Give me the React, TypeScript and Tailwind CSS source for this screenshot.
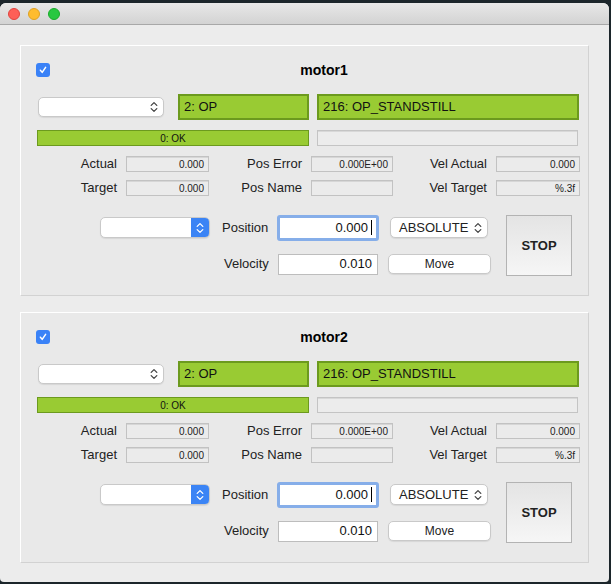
import React from "react";

const Chevrons = ({ color = "#444" }: { color?: string }) => (
  <svg width="8" height="12" viewBox="0 0 8 12" fill="none">
    <path d="M1.2 4.4 L4 1.6 L6.8 4.4" stroke={color} strokeWidth="1.3" strokeLinecap="round" strokeLinejoin="round" />
    <path d="M1.2 7.6 L4 10.4 L6.8 7.6" stroke={color} strokeWidth="1.3" strokeLinecap="round" strokeLinejoin="round" />
  </svg>
);

const CheckBox = () => (
  <div className="w-[14px] h-[14px] rounded-[3px] bg-[#3a82f7] flex items-center justify-center">
    <svg width="10" height="10" viewBox="0 0 10 10" fill="none">
      <path d="M2.4 5.2 L4.2 7.4 L7.6 2.4" stroke="white" strokeWidth="1.5" strokeLinecap="round" strokeLinejoin="round" />
    </svg>
  </div>
);

const ReadField = ({ value, w }: { value?: string; w: string }) => (
  <div
    className={`${w} h-[16px] border border-[#c2c2c2] bg-[#ebebeb] shadow-[inset_0_1px_0_#d6d6d6] flex items-center justify-end pr-[4px] text-[10px] text-[#222]`}
  >
    {value}
  </div>
);

const Label = ({ text, w }: { text: string; w: string }) => (
  <div className={`${w} text-right text-[13px] text-[#222] pr-[9px]`}>{text}</div>
);

const MotorBox = ({ name }: { name: string }) => (
  <div className="mx-[20px] h-[251px] border border-[#d2d2d2] border-t-white border-l-white bg-[#e9e9e9]">
    {/* title row */}
    <div className="flex items-center h-[14px] mt-[17px] pl-[15px]">
      <CheckBox />
      <div className="flex-1 text-center font-bold text-[14px] text-black pl-[10px]">{name}</div>
    </div>

    {/* state row */}
    <div className="flex items-center mt-[17px] h-[26px]">
      <div className="ml-[17px] w-[126px] h-[20px] rounded-[5px] bg-white border border-[#c9c9c9] shadow-[0_1px_1px_rgba(0,0,0,0.08)] flex items-center justify-end pr-[5px]">
        <Chevrons />
      </div>
      <div className="ml-[14px] w-[131px] h-[26px] bg-[#99cb33] border-2 border-[#6c9a1e] flex items-center pl-[4px] text-[13px] text-[#111]">
        2: OP
      </div>
      <div className="ml-[8px] w-[262px] h-[26px] bg-[#99cb33] border-2 border-[#6c9a1e] flex items-center pl-[4px] text-[13px] text-[#111]">
        216: OP_STANDSTILL
      </div>
    </div>

    {/* error row */}
    <div className="flex items-center mt-[10px] h-[16px]">
      <div className="ml-[16px] w-[272px] h-[16px] bg-[#99cb33] border border-[#6c9a1e] flex items-center justify-center text-[10px] text-[#111]">
        0: OK
      </div>
      <div className="ml-[8px] w-[261px] h-[16px] bg-[#ececec] border border-[#c4c4c4] shadow-[inset_0_1px_0_#d8d8d8]" />
    </div>

    {/* readouts */}
    <div className="flex items-center mt-[10px] h-[16px]">
      <Label text="Actual" w="w-[105px]" />
      <ReadField value="0.000" w="w-[83px]" />
      <Label text="Pos Error" w="w-[102px]" />
      <ReadField value="0.000E+00" w="w-[82px]" />
      <Label text="Vel Actual" w="w-[103px]" />
      <ReadField value="0.000" w="w-[84px]" />
    </div>
    <div className="flex items-center mt-[8px] h-[16px]">
      <Label text="Target" w="w-[105px]" />
      <ReadField value="0.000" w="w-[83px]" />
      <Label text="Pos Name" w="w-[102px]" />
      <ReadField w="w-[82px]" />
      <Label text="Vel Target" w="w-[103px]" />
      <ReadField value="%.3f" w="w-[84px]" />
    </div>

    {/* move controls */}
    <div className="flex mt-[18px]">
      <div className="ml-[79px] grid grid-cols-[110px_67px_102px_112px] grid-rows-[27px_28px] gap-y-[9px] items-center">
        <div className="h-[21px] rounded-[5px] bg-white border border-[#c9c9c9] shadow-[0_1px_1px_rgba(0,0,0,0.08)] flex overflow-hidden">
          <div className="flex-1" />
          <div className="w-[18px] bg-[#3b84f5] flex items-center justify-center">
            <Chevrons color="white" />
          </div>
        </div>
        <div className="text-[13px] text-[#222] pl-[12px]">Position</div>
        <div className="h-[26px] rounded-[3px] bg-white border-[3px] border-[#86aee9] flex items-center justify-end pr-[4px] text-[13px] text-[#111]">
          0.000
          <span className="ml-[3px] w-[1px] h-[15px] bg-black" />
        </div>
        <div className="ml-[11px] w-[98px] h-[21px] rounded-[5px] bg-white border border-[#c9c9c9] shadow-[0_1px_1px_rgba(0,0,0,0.08)] flex items-center pl-[8px] pr-[5px] justify-between text-[13px] text-[#222]">
          ABSOLUTE
          <Chevrons />
        </div>

        <div />
        <div className="text-[13px] text-[#222] pl-[14px]">Velocity</div>
        <div className="ml-[1px] w-[100px] h-[21px] bg-white border border-[#bdbdbd] flex items-center justify-end pr-[5px] text-[13px] text-[#111]">
          0.010
        </div>
        <div className="ml-[9px] w-[103px] h-[20px] rounded-[5px] bg-white border border-[#c9c9c9] shadow-[0_1px_1px_rgba(0,0,0,0.08)] flex items-center justify-center text-[12px] text-[#222]">
          Move
        </div>
      </div>
      <div className="ml-[15px] mt-[1px] w-[66px] h-[61px] border border-[#b3b3b3] bg-gradient-to-b from-[#e4e4e4] to-[#f6f6f6] flex items-center justify-center font-bold text-[13px] text-[#222]">
        STOP
      </div>
    </div>
  </div>
);

export default function App() {
  return (
    <div
      className="w-[611px] h-[584px] bg-[#1c262b] pt-[3px]"
      style={{ fontFamily: '"Liberation Sans", Arial, sans-serif' }}
    >
      <div className="w-[609px] h-[579px] bg-[#ececec] rounded-t-[6px] rounded-b-[4px] overflow-hidden flex flex-col">
        <div className="h-[22px] bg-gradient-to-b from-[#e8e8e8] to-[#d3d3d3] border-b border-[#a8a8a8] flex items-center pl-[8px] gap-[8px]">
          <div className="w-[12px] h-[12px] rounded-full bg-[#fe5f57] border border-[#e0443e]" />
          <div className="w-[12px] h-[12px] rounded-full bg-[#febc2e] border border-[#dea123]" />
          <div className="w-[12px] h-[12px] rounded-full bg-[#28c840] border border-[#1aab29]" />
        </div>
        <div className="pt-[20px] flex flex-col gap-[16px]">
          <MotorBox name="motor1" />
          <MotorBox name="motor2" />
        </div>
      </div>
    </div>
  );
}
